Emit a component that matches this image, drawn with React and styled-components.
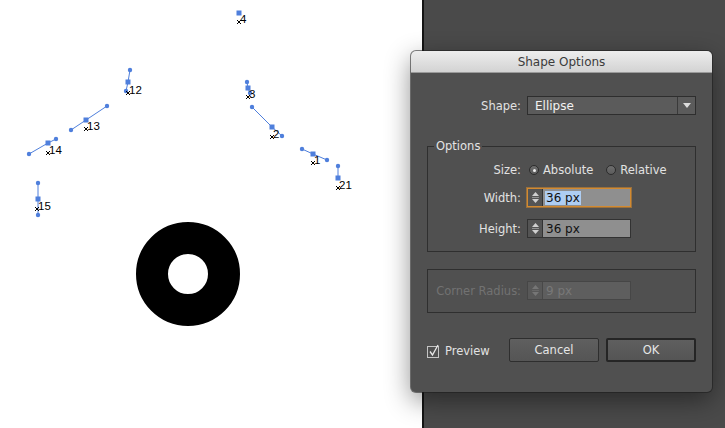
import React from 'react';
import styled, { createGlobalStyle } from 'styled-components';

const GlobalStyle = createGlobalStyle`
  html, body {
    margin: 0;
    padding: 0;
    background: #ffffff;
  }
  body {
    font-family: "DejaVu Sans", "Liberation Sans", sans-serif;
  }
`;

const Screen = styled.div`
  position: relative;
  display: flex;
  width: 725px;
  height: 428px;
  overflow: hidden;
`;

const Artboard = styled.div`
  width: 422px;
  height: 100%;
  background: #ffffff;
  flex: none;
`;

const Divider = styled.div`
  width: 2px;
  background: #151515;
  flex: none;
`;

const Panel = styled.div`
  flex: 1;
  background: #4a4a4a;
`;

const Dialog = styled.div`
  position: absolute;
  left: 411px;
  top: 51px;
  width: 301px;
  height: 341px;
  box-sizing: border-box;
  display: flex;
  flex-direction: column;
  background: #505050;
  border-radius: 5px;
  box-shadow: 0 0 0 1px rgba(30, 30, 30, 0.55), 0 8px 26px rgba(0, 0, 0, 0.45);
`;

const TitleBar = styled.div`
  height: 22px;
  flex: none;
  display: flex;
  align-items: center;
  justify-content: center;
  background: linear-gradient(#ededed, #d3d3d3);
  border-radius: 5px 5px 0 0;
  border-bottom: 1px solid #9a9a9a;
  box-sizing: border-box;
  color: #3b3b3b;
  font-size: 12px;
`;

const Body = styled.div`
  display: flex;
  flex-direction: column;
  padding: 23px 16px 30px 16px;
`;

const Row = styled.div`
  display: flex;
  align-items: center;
  gap: 6px;
  margin-top: ${props => props.$top || 0}px;
  height: ${props => props.$height || 19}px;
`;

const Label = styled.div`
  width: ${props => props.$width}px;
  flex: none;
  text-align: right;
  font-size: 11.5px;
  white-space: nowrap;
  color: ${props => (props.$disabled ? '#727272' : '#e2e2e2')};
`;

const Select = styled.div`
  width: 169px;
  height: 19px;
  box-sizing: border-box;
  display: flex;
  align-items: center;
  background: #5b5b5b;
  border: 1px solid #2e2e2e;
`;

const SelectValue = styled.div`
  flex: 1;
  padding-left: 7px;
  font-size: 12px;
  color: #f2f2f2;
`;

const SelectArrow = styled.div`
  width: 17px;
  height: 100%;
  display: flex;
  align-items: center;
  justify-content: center;
  border-left: 1px solid #3a3a3a;
`;

const Group = styled.fieldset`
  margin: ${props => props.$top}px 0 0 0;
  padding: ${props => props.$padTop}px 0 ${props => props.$padBottom}px 6px;
  border: 1px solid #2f2f2f;
  min-width: 0;
  display: flex;
  flex-direction: column;
`;

const Legend = styled.legend`
  padding: 0 2px;
  font-size: 11.5px;
  line-height: 14px;
  color: #e4e4e4;
`;

const RadioOption = styled.div`
  display: flex;
  align-items: center;
  gap: 4px;
  margin-left: ${props => props.$left}px;
  font-size: 11.5px;
  color: #e2e2e2;
`;

const Radio = styled.span`
  width: 10px;
  height: 10px;
  box-sizing: border-box;
  border-radius: 50%;
  border: 1px solid #2c2c2c;
  background: linear-gradient(#6e6e6e, #5c5c5c);
  display: flex;
  align-items: center;
  justify-content: center;

  &::after {
    content: '';
    width: 3px;
    height: 3px;
    border-radius: 50%;
    background: ${props => (props.$checked ? '#f0f0f0' : 'transparent')};
  }
`;

const Field = styled.div`
  width: 104px;
  height: 19px;
  box-sizing: border-box;
  display: flex;
  border: 1px solid ${props => (props.$focused ? '#d38a30' : props.$disabled ? '#464646' : '#323232')};
  box-shadow: ${props => (props.$focused ? '0 0 0 1px rgba(211, 138, 48, 0.55)' : 'none')};
`;

const Spinner = styled.div`
  width: 15px;
  flex: none;
  display: flex;
  flex-direction: column;
  align-items: center;
  justify-content: space-between;
  padding: 3px 0;
  box-sizing: border-box;
  background: ${props => (props.$disabled ? '#585858' : '#545454')};
  border-right: 1px solid ${props => (props.$disabled ? '#484848' : '#333333')};
`;

const FieldText = styled.div`
  flex: 1;
  display: flex;
  align-items: center;
  padding-left: 2px;
  font-size: 12px;
  background: ${props => (props.$disabled ? '#5e5e5e' : '#8f8f8f')};
  color: ${props => (props.$disabled ? '#787878' : '#111111')};
`;

const Selected = styled.span`
  background: #aecdf2;
  padding: 0 1px;
`;

const Footer = styled.div`
  display: flex;
  align-items: center;
  margin-top: 25px;
  height: 24px;
`;

const Check = styled.label`
  display: flex;
  align-items: center;
  gap: 4px;
  font-size: 11.5px;
  color: #e2e2e2;
  margin-top: 1px;
`;

const Buttons = styled.div`
  margin-left: auto;
  display: flex;
  gap: 7px;
`;

const Button = styled.button`
  width: 90px;
  height: 24px;
  box-sizing: border-box;
  padding: 0;
  font-family: "DejaVu Sans", sans-serif;
  font-size: 11.5px;
  color: #e6e6e6;
  background: linear-gradient(#5f5f5f, #555555);
  border: ${props => (props.$primary ? '2px solid #252525' : '1px solid #2e2e2e')};
  border-radius: 2px;
`;

const BLUE = '#4f7fdc';

const nodes = [
  { label: '4', anchor: [239, 13], handles: [], cross: [239, 22] },
  { label: '12', anchor: [128, 82], handles: [[130, 70], [126, 91]], cross: [128, 93] },
  { label: '13', anchor: [86, 120], handles: [[71, 130], [107, 106]], cross: [86, 129] },
  { label: '14', anchor: [48, 143], handles: [[29, 154], [56, 139]], cross: [48, 153] },
  { label: '15', anchor: [38, 199], handles: [[38, 183], [38, 215]], cross: [37, 209] },
  { label: '3', anchor: [248, 88], handles: [[247, 82], [250, 93]], cross: [248, 97] },
  { label: '2', anchor: [272, 127], handles: [[252, 107], [282, 136]], cross: [272, 137] },
  { label: '1', anchor: [313, 154], handles: [[302, 149], [327, 160]], cross: [313, 163] },
  { label: '21', anchor: [338, 178], handles: [[338, 166]], cross: [338, 188] },
];

function Node({ node }) {
  const [ax, ay] = node.anchor;
  const [cx, cy] = node.cross;
  const pts = node.handles.length === 2
    ? [node.handles[0], node.anchor, node.handles[1]]
    : [node.anchor, ...node.handles];
  return (
    <g>
      {pts.length > 1 && (
        <polyline points={pts.map(p => p.join(',')).join(' ')} fill="none" stroke={BLUE} strokeWidth="1" />
      )}
      {node.handles.map(([hx, hy]) => (
        <circle key={`${hx}-${hy}`} cx={hx} cy={hy} r="2.2" fill={BLUE} />
      ))}
      <rect x={ax - 2.5} y={ay - 2.5} width="5" height="5" fill={BLUE} />
      <path d={`M${cx - 2} ${cy - 2} L${cx + 2} ${cy + 2} M${cx + 2} ${cy - 2} L${cx - 2} ${cy + 2}`} stroke="#000" strokeWidth="1" />
      <text x={cx + 1} y={cy + 1} fontFamily="Liberation Sans, sans-serif" fontSize="11.5" fill="#000">{node.label}</text>
    </g>
  );
}

function Arrows({ color }) {
  return (
    <>
      <svg width="7" height="4" viewBox="0 0 7 4"><path d="M0 4 L3.5 0 L7 4 Z" fill={color} /></svg>
      <svg width="7" height="1" viewBox="0 0 7 1"><rect width="7" height="1" fill={color} opacity="0.5" /></svg>
      <svg width="7" height="4" viewBox="0 0 7 4"><path d="M0 0 L3.5 4 L7 0 Z" fill={color} /></svg>
    </>
  );
}

function NumberField({ value, focused, disabled }) {
  return (
    <Field $focused={focused} $disabled={disabled}>
      <Spinner $disabled={disabled}>
        <Arrows color={disabled ? '#767676' : '#d0d0d0'} />
      </Spinner>
      <FieldText $disabled={disabled}>
        {focused ? <Selected>{value}</Selected> : <span style={{ paddingLeft: 1 }}>{value}</span>}
      </FieldText>
    </Field>
  );
}

export default function App() {
  return (
    <>
      <GlobalStyle />
      <Screen>
        <Artboard>
          <svg width="422" height="428" viewBox="0 0 422 428">
            {nodes.map(node => <Node key={node.label} node={node} />)}
            <circle cx="188" cy="274" r="36" fill="none" stroke="#000" strokeWidth="32" />
          </svg>
        </Artboard>
        <Divider />
        <Panel />
        <Dialog>
          <TitleBar>Shape Options</TitleBar>
          <Body>
            <Row>
              <Label $width={94}>Shape:</Label>
              <Select>
                <SelectValue>Ellipse</SelectValue>
                <SelectArrow>
                  <svg width="8" height="5" viewBox="0 0 8 5"><path d="M0 0 L8 0 L4 5 Z" fill="#dcdcdc" /></svg>
                </SelectArrow>
              </Select>
            </Row>
            <Group $top={24} $padTop={9} $padBottom={13}>
              <Legend>Options</Legend>
              <Row $height={16}>
                <Label $width={87}>Size:</Label>
                <RadioOption $left={2}><Radio $checked />Absolute</RadioOption>
                <RadioOption $left={7}><Radio />Relative</RadioOption>
              </Row>
              <Row $top={10}>
                <Label $width={87}>Width:</Label>
                <NumberField value="36 px" focused />
              </Row>
              <Row $top={12}>
                <Label $width={87}>Height:</Label>
                <NumberField value="36 px" />
              </Row>
            </Group>
            <Group $top={17} $padTop={11} $padBottom={12}>
              <Row>
                <Label $width={87} $disabled>Corner Radius:</Label>
                <NumberField value="9 px" disabled />
              </Row>
            </Group>
            <Footer>
              <Check>
                <svg width="14" height="14" viewBox="0 0 14 14">
                  <rect x="0.5" y="2.5" width="11" height="11" fill="none" stroke="#c4c4c4" />
                  <polyline points="3,7.5 5.5,11 11,1" fill="none" stroke="#e8e8e8" strokeWidth="1.3" />
                </svg>
                Preview
              </Check>
              <Buttons>
                <Button type="button">Cancel</Button>
                <Button type="button" $primary>OK</Button>
              </Buttons>
            </Footer>
          </Body>
        </Dialog>
      </Screen>
    </>
  );
}
